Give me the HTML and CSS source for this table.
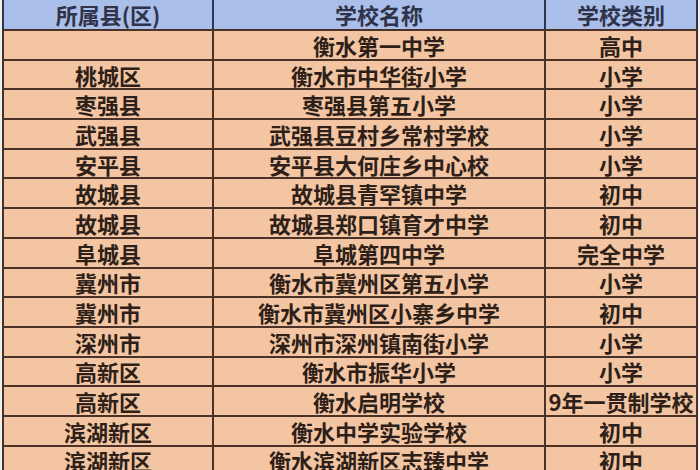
FILE: index.html
```html
<!DOCTYPE html>
<html lang="zh-CN">
<head>
<meta charset="utf-8">
<title>学校名单</title>
<link rel="stylesheet" href="styles.css">
</head>
<body>
<table class="schools">
  <colgroup>
    <col class="c1"><col class="c2"><col class="c3">
  </colgroup>
  <thead>
    <tr><th>所属县(区)</th><th>学校名称</th><th>学校类别</th></tr>
  </thead>
  <tbody>
    <tr><td></td><td>衡水第一中学</td><td>高中</td></tr>
    <tr><td>桃城区</td><td>衡水市中华街小学</td><td>小学</td></tr>
    <tr><td>枣强县</td><td>枣强县第五小学</td><td>小学</td></tr>
    <tr><td>武强县</td><td>武强县豆村乡常村学校</td><td>小学</td></tr>
    <tr><td>安平县</td><td>安平县大何庄乡中心校</td><td>小学</td></tr>
    <tr><td>故城县</td><td>故城县青罕镇中学</td><td>初中</td></tr>
    <tr><td>故城县</td><td>故城县郑口镇育才中学</td><td>初中</td></tr>
    <tr><td>阜城县</td><td>阜城第四中学</td><td>完全中学</td></tr>
    <tr><td>冀州市</td><td>衡水市冀州区第五小学</td><td>小学</td></tr>
    <tr><td>冀州市</td><td>衡水市冀州区小寨乡中学</td><td>初中</td></tr>
    <tr><td>深州市</td><td>深州市深州镇南街小学</td><td>小学</td></tr>
    <tr><td>高新区</td><td>衡水市振华小学</td><td>小学</td></tr>
    <tr><td>高新区</td><td>衡水启明学校</td><td>9年一贯制学校</td></tr>
    <tr><td>滨湖新区</td><td>衡水中学实验学校</td><td>初中</td></tr>
    <tr><td>滨湖新区</td><td>衡水滨湖新区志臻中学</td><td>初中</td></tr>
  </tbody>
</table>
</body>
</html>
```
FILE: styles.css
```css
html, body {
  margin: 0;
  padding: 0;
  background: #f1efee;
  overflow: hidden;
}
body {
  padding-left: 2px;
}
.schools {
  border-collapse: collapse;
  table-layout: fixed;
  width: 694px;
  font-family: "Noto Sans CJK SC", "Noto Sans", sans-serif;
  font-size: 22px;
  font-weight: 700;
  color: #2e1f18;
}
.c1 { width: 210px; }
.c2 { width: 332px; }
.c3 { width: 152px; }
.schools th,
.schools td {
  border: 2px solid #4b3229;
  padding: 0;
  text-align: center;
  line-height: 26px;
  white-space: nowrap;
}
.schools th {
  background: #a9bfe9;
  color: #2f3248;
  font-weight: 700;
  height: 27px;
  vertical-align: bottom;
  padding-bottom: 2px;
  border-top: none;
  border-color: #3a3f5a #2c3550 #4b3229 #2c3550;
}
.schools td {
  background: #f3c5a3;
  height: 27.7px;
  overflow: hidden;
}
```
